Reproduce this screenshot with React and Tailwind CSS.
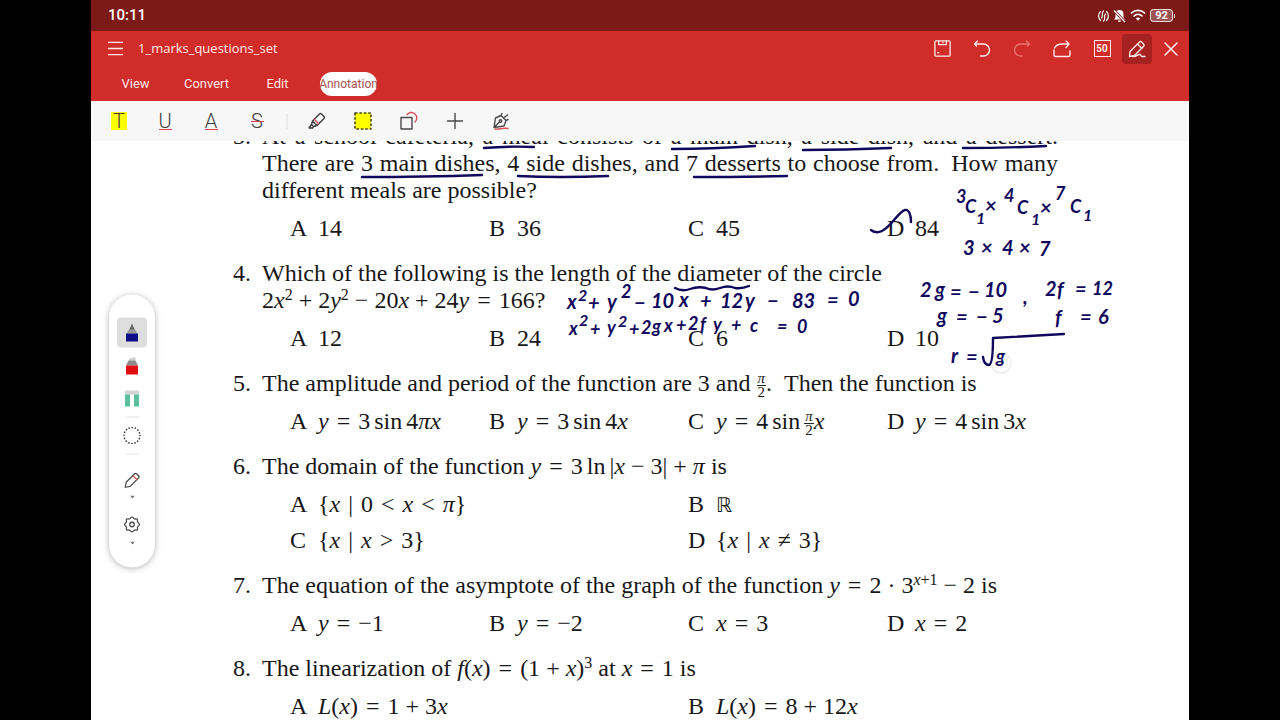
import React, { useState } from 'react';
import { Menu, X } from 'lucide-react';

// ---------- math helpers ----------

const V = ({ children }) => <i className="font-normal">{children}</i>;
const Op = ({ children }) => <span className="mx-2">{children}</span>;
const Bin = ({ children }) => <span className="mx-1.5">{children}</span>;
const Sup = ({ children }) => <sup className="text-[16px] leading-none">{children}</sup>;
const Thin = () => <span className="ml-1" />;

const Frac = ({ top, bottom }) => (
  <span className="-my-1 inline-flex flex-col items-center align-middle text-[15px] leading-[13px]">
    <span className="border-b border-neutral-800 px-px">{top}</span>
    <span>{bottom}</span>
  </span>
);

const questions = [
  {
    n: 3,
    lines: [
      { full: true, text: 'At a school cafeteria, a meal consists of a main dish, a side dish, and a dessert.' },
      { full: true, text: <>There are 3 main dishes, 4 side dishes, and 7 desserts to choose from.&ensp;How many</> },
      { text: 'different meals are possible?' },
    ],
    options: ['14', '36', '45', '84'],
  },
  {
    n: 4,
    lines: [
      { text: 'Which of the following is the length of the diameter of the circle' },
      { text: <>2<V>x</V><Sup>2</Sup><Bin>+</Bin>2<V>y</V><Sup>2</Sup><Bin>−</Bin>20<V>x</V><Bin>+</Bin>24<V>y</V><Op>=</Op>166?</> },
    ],
    options: ['12', '24', '6', '10'],
  },
  {
    n: 5,
    lines: [
      { text: <>The amplitude and period of the function are 3 and <Frac top={<V>π</V>} bottom="2" />.&ensp;Then the function is</> },
    ],
    options: [
      <><V>y</V><Op>=</Op>3<Thin />sin<Thin />4<V>πx</V></>,
      <><V>y</V><Op>=</Op>3<Thin />sin<Thin />4<V>x</V></>,
      <><V>y</V><Op>=</Op>4<Thin />sin<Thin /><Frac top={<V>π</V>} bottom="2" /><V>x</V></>,
      <><V>y</V><Op>=</Op>4<Thin />sin<Thin />3<V>x</V></>,
    ],
  },
  {
    n: 6,
    wide: true,
    lines: [
      { text: <>The domain of the function <V>y</V><Op>=</Op>3<Thin />ln<Thin />|<V>x</V><Bin>−</Bin>3|<Bin>+</Bin><V>π</V> is</> },
    ],
    options: [
      <>{'{'}<V>x</V><Op>|</Op>0<Op>&lt;</Op><V>x</V><Op>&lt;</Op><V>π</V>{'}'}</>,
      <span className="font-['DejaVu_Sans'] text-[20px]">ℝ</span>,
      <>{'{'}<V>x</V><Op>|</Op><V>x</V><Op>&gt;</Op>3{'}'}</>,
      <>{'{'}<V>x</V><Op>|</Op><V>x</V><Op>≠</Op>3{'}'}</>,
    ],
  },
  {
    n: 7,
    lines: [
      { text: <>The equation of the asymptote of the graph of the function <V>y</V><Op>=</Op>2<Bin>·</Bin>3<Sup><V>x</V>+1</Sup><Bin>−</Bin>2 is</> },
    ],
    options: [
      <><V>y</V><Op>=</Op>−1</>,
      <><V>y</V><Op>=</Op>−2</>,
      <><V>x</V><Op>=</Op>3</>,
      <><V>x</V><Op>=</Op>2</>,
    ],
  },
  {
    n: 8,
    wide: true,
    lines: [
      { text: <>The linearization of <V>f</V>(<V>x</V>)<Op>=</Op>(1<Bin>+</Bin><V>x</V>)<Sup>3</Sup> at <V>x</V><Op>=</Op>1 is</> },
    ],
    options: [
      <><V>L</V>(<V>x</V>)<Op>=</Op>1<Bin>+</Bin>3<V>x</V></>,
      <><V>L</V>(<V>x</V>)<Op>=</Op>8<Bin>+</Bin>12<V>x</V></>,
    ],
  },
];

function Question({ q }) {
  return (
    <li className="mb-[18px] flex">
      <span className="w-[29px] shrink-0">{q.n}.</span>
      <div className="min-w-0 flex-1">
        {q.lines.map((line, i) => (
          <p key={i} className={line.full ? 'whitespace-nowrap [text-align-last:justify]' : 'whitespace-nowrap'}>
            {line.text}
          </p>
        ))}
        <ol className={`mt-[11px] -mr-7 ml-7 grid gap-y-[9px] ${q.wide ? 'grid-cols-2' : 'grid-cols-4'}`}>
          {q.options.map((opt, i) => (
            <li key={i} className="flex h-[27px] whitespace-nowrap">
              <span className="w-7 shrink-0">{'ABCD'[i]}</span>
              <span>{opt}</span>
            </li>
          ))}
        </ol>
      </div>
    </li>
  );
}

// ---------- pen annotations ----------

const noteSize = { sm: 'text-[16px]', md: 'text-[18px]', lg: 'text-[20px]' };

// [x, baseline, text, size]
const notes = [
  [567, 309, 'x', 'lg'], [578, 301, '2', 'sm'], [588, 310, '+', 'lg'], [607, 309, 'y', 'lg'], [621, 298, '2', 'md'],
  [634, 310, '−', 'lg'], [651, 308, '10', 'lg'], [679, 307, 'x', 'lg'], [700, 308, '+', 'lg'], [720, 308, '12', 'lg'],
  [745, 308, 'y', 'lg'], [767, 308, '−', 'lg'], [792, 308, '83', 'lg'], [827, 307, '=', 'lg'], [848, 306, '0', 'lg'],

  [569, 335, 'x', 'md'], [579, 326, '2', 'sm'], [590, 336, '+', 'md'], [607, 334, 'y', 'md'], [618, 327, '2', 'sm'],
  [629, 336, '+', 'md'], [641, 334, '2', 'md'], [652, 333, 'g', 'md'], [664, 332, 'x', 'md'], [676, 332, '+', 'md'],
  [688, 330, '2', 'md'], [700, 331, 'f', 'md'], [713, 331, 'y', 'md'], [731, 332, '+', 'md'], [750, 332, 'c', 'md'],
  [777, 333, '=', 'md'], [797, 333, '0', 'md'],

  [956, 203, '3', 'md'], [965, 213, 'C', 'md'], [976, 224, '1', 'sm'], [985, 213, '×', 'lg'], [1004, 202, '4', 'md'],
  [1017, 214, 'C', 'md'], [1031, 225, '1', 'sm'], [1040, 215, '×', 'lg'], [1055, 200, '7', 'md'], [1070, 213, 'C', 'md'],
  [1083, 221, '1', 'sm'],

  [963, 255, '3', 'lg'], [981, 255, '×', 'lg'], [1002, 255, '4', 'lg'], [1019, 255, '×', 'lg'], [1039, 256, '7', 'lg'],

  [920, 297, '2', 'lg'], [935, 297, 'g', 'lg'], [950, 299, '=', 'lg'], [968, 299, '−', 'lg'], [984, 297, '10', 'lg'],
  [1023, 304, ',', 'lg'], [1045, 296, '2', 'lg'], [1057, 297, 'f', 'lg'], [1075, 296, '=', 'lg'], [1092, 295, '12', 'md'],
  [937, 323, 'g', 'lg'], [956, 324, '=', 'lg'], [976, 324, '−', 'lg'], [992, 323, '5', 'lg'],
  [1055, 325, 'f', 'lg'], [1080, 324, '=', 'lg'], [1098, 324, '6', 'lg'],
  [951, 363, 'r', 'lg'], [966, 364, '=', 'lg'], [996, 363, 'g', 'md'],
];

const strokes = [
  'M484 148 Q508 146 534 147',
  'M672 149 Q712 149 755 146',
  'M803 150 Q846 150 891 148',
  'M963 148 Q1004 148 1046 146',
  'M362 177 Q424 177 482 175',
  'M518 176 Q560 178 608 176',
  'M694 177 Q740 177 787 176',
  'M675 288 Q682 292 690 289 Q698 286 706 288 Q712 291 720 288 Q728 285 735 288 Q742 289 749 286',
  'M871 230 Q876 234 882 231 C892 226 898 212 905 210 C909 209 911 215 911 222',
  'M983 357 Q984 365 989 365 Q993 364 993 338 Q1028 336 1064 334',
];

function InkLayer() {
  return (
    <svg className="pointer-events-none absolute inset-0 h-full w-full overflow-hidden" aria-label="Annotations">
      <g transform="translate(-91 -141)" fill="#10085c">
        <circle cx="1001" cy="363" r="10" fill="none" stroke="#f1f1f4" strokeWidth="2" />
        {strokes.map((d) => (
          <path key={d} d={d} fill="none" stroke="#10085c" strokeWidth="2.4" strokeLinecap="round" strokeLinejoin="round" />
        ))}
        {notes.map(([x, y, text, size]) => (
          <text key={`${x}-${y}`} x={x} y={y} className={`font-[Lato] font-bold italic ${noteSize[size]}`}>
            {text}
          </text>
        ))}
      </g>
    </svg>
  );
}

// ---------- icons ----------

const Icon = ({ size = 20, children, ...rest }) => (
  <svg width={size} height={size} viewBox="0 0 20 20" fill="none" stroke="currentColor" strokeWidth="1.4" strokeLinecap="round" strokeLinejoin="round" {...rest}>
    {children}
  </svg>
);

const SaveIcon = () => (
  <Icon size={19}>
    <rect x="2" y="2" width="16" height="16" rx="1" />
    <path d="M6 2v4h8V2M10.500 3v1M5 14.500h1" />
  </Icon>
);

const UndoIcon = () => (
  <Icon>
    <path d="M5.500 2 2.500 5h9a6 6 0 0 1 0 12H8.500M2.500 5 4.500 7" />
  </Icon>
);

const RedoIcon = () => (
  <Icon>
    <path d="M14.500 2l3 3h-9a6 6 0 0 0 0 12H10M17.500 5 15.500 7" />
  </Icon>
);

const ShareIcon = () => (
  <Icon>
    <path d="M2 11v5a1.500 1.500 0 0 0 1.500 1.500h13A1.500 1.500 0 0 0 18 16v-4M2.500 9C4 6 7 5 10 5h7M14 2l3 3-3 3.500" />
  </Icon>
);

const EditIcon = () => (
  <Icon>
    <path d="M2.500 17.500 3 12.500 12.500 3a1.500 1.500 0 0 1 2 0l2.200 2.200a1.500 1.500 0 0 1 0 2L7.500 16.500zM10.500 5l4.500 4.500M6 17.500c3 .5 5-2.500 7-2 1.500.4.500 2 2 2h3" />
  </Icon>
);

const PencilRed = () => (
  <Icon size={18} stroke="#4b4b4b">
    <path d="M2.500 17.500 3.500 12 13 2.500a1.500 1.500 0 0 1 2 0L17.500 5a1.500 1.500 0 0 1 0 2L8 16.500z" />
    <path d="m11.500 5 4 4" stroke="#d8505a" />
  </Icon>
);

const MarkerIcon = () => (
  <Icon stroke="#3d3d3d">
    <path d="M5.500 10 12.500 3a1.500 1.500 0 0 1 2 0L17 5.500a1.500 1.500 0 0 1 0 2L10 14.500zM5.500 10l-1 3.500 2 2 3.500-1M4.500 13.500 2 17h3.500l1-1.500" />
    <path d="m7.500 8.500 4 4" stroke="#d8505a" />
  </Icon>
);

const AreaIcon = () => (
  <Icon>
    <rect x="2" y="2" width="16" height="16" fill="#ffff00" stroke="#4a4a10" strokeWidth="1.600" strokeDasharray="2.600 1.800" strokeLinecap="butt" />
  </Icon>
);

const ShapesIcon = () => (
  <Icon stroke="#4a4a4a">
    <rect x="2" y="6.500" width="11" height="11.500" />
    <path d="M8 3.500a5.500 5.500 0 1 1 8 7.500" stroke="#d8505a" />
  </Icon>
);

const PlusIcon = () => (
  <Icon stroke="#4a4a4a">
    <path d="M10 2.500v15M2.500 10h15" />
  </Icon>
);

const SignIcon = () => (
  <Icon stroke="#4a4a4a">
    <path d="M3 16.500 4.500 7l5.500-2.500 5 5-2 5.500zM3 16.500 8.500 11M10 4.500l1-2M15 9.500l2-1M12.500 7l4-3" />
    <circle cx="9.500" cy="10" r="1.200" />
    <path d="M4 18c4 .6 8-1.500 13-.5" stroke="#d8505a" />
  </Icon>
);

const GearIcon = () => (
  <Icon size={18} stroke="#4b4b4b">
    <path d="M10 1.800C11.500 1.800 11.800 3.500 13 3.800S15.500 3.500 16 4.200 15.700 6.200 16.200 7.300 18.200 8.800 18.200 10 16.600 11.600 16.200 12.700 16.700 15 16 15.800 14.200 15.800 13 16.200 11.500 18.200 10 18.200 8.200 16.600 7 16.200 4.700 16.600 4 15.800 4.200 13.800 3.800 12.700 1.800 11.300 1.800 10 3.400 8.400 3.800 7.300 3.300 5 4 4.200 5.800 4.200 7 3.800 8.500 1.800 10 1.800z" />
    <circle cx="10" cy="10" r="2.500" />
  </Icon>
);

const PenTip = () => (
  <svg width="14" height="20" viewBox="0 0 14 20">
    <path d="M7 1 10 8H4z" fill="#666" />
    <path d="M4 7h6l2.500 4h-11z" fill="#999" />
    <rect x="1" y="11" width="12" height="8" fill="#0b0b86" />
  </svg>
);

const HighlighterTip = () => (
  <svg width="14" height="20" viewBox="0 0 14 20">
    <path d="M4 3 10.500 1.500V5H4z" fill="#d0d0d0" />
    <path d="M3.500 5h7l2.500 5H1z" fill="#8b8b8b" />
    <rect x="1" y="10" width="12" height="9" fill="#e00d12" />
  </svg>
);

const EraserTip = () => (
  <svg width="14" height="18" viewBox="0 0 14 18">
    <rect x="0" y="1" width="14" height="4" fill="#d4d4d4" />
    <rect x="0" y="5" width="5" height="12" fill="#5cc0a0" />
    <rect x="9" y="5" width="5" height="12" fill="#5cc0a0" />
  </svg>
);

const Caret = () => (
  <svg width="5" height="3" viewBox="0 0 5 3" className="shrink-0">
    <path d="M0 0h5L2.500 3z" fill="#777" />
  </svg>
);

// ---------- chrome ----------

function StatusBar() {
  return (
    <div className="flex h-[31px] items-center justify-between bg-[#7c1a18] pr-3.5 pl-[17px] text-white">
      <span className="text-[15px] font-medium">10:11</span>
      <div className="flex items-center gap-1">
        <svg width="11" height="12" viewBox="0 0 11 12" fill="none" stroke="currentColor" strokeWidth="1.200" strokeLinecap="round">
          <path d="M2.500 1.500C0 4 0 8 2.500 10.500M8.500 1.500c2.500 2.500 2.500 6.500 0 9M5.500 1C2.500 3.500 6 5.500 3.500 8M7.500 4C5 6.500 8.500 8.500 5.500 11" />
        </svg>
        <svg width="13" height="14" viewBox="0 0 13 14">
          <path d="M6.500 1a4 4 0 0 1 4 4v3.500l1.500 2H1l1.500-2V5a4 4 0 0 1 4-4zM5 11.500h3a1.500 1.500 0 0 1-3 0z" fill="currentColor" />
          <path d="M1 1.500 12 13" stroke="#7c1a18" strokeWidth="3" />
          <path d="M1 1.500 12 13" stroke="currentColor" strokeWidth="1.200" />
        </svg>
        <svg width="16" height="13" viewBox="0 0 16 13" fill="none" stroke="currentColor" strokeWidth="1.7" strokeLinecap="round">
          <path d="M1.500 4C5 .6 11 .6 14.500 4M4 7C6.300 4.800 9.700 4.800 12 7" />
          <path d="M5.800 9.400Q8 7.800 10.200 9.400L8 11.800z" fill="currentColor" stroke="none" />
        </svg>
        <div className="flex items-center">
          <span className="flex h-[13px] w-[23px] items-center justify-center rounded border border-white/80 bg-white/25 text-[11px] leading-none font-bold">92</span>
          <span className="ml-px h-1 w-px bg-white/80" />
        </div>
      </div>
    </div>
  );
}

const tabs = ['View', 'Convert', 'Edit', 'Annotation'];

function Header({ tab, setTab }) {
  const btn = 'flex size-[30px] items-center justify-center rounded';
  return (
    <header className="bg-[#d02c2a] text-[#ffe9e6]">
      <div className="flex h-[35px] items-center justify-between pr-[3px] pl-3.5">
        <div className="flex items-center gap-3">
          <button aria-label="Menu"><Menu size={21} strokeWidth={1.5} /></button>
          <h1 className="font-['Open_Sans'] text-[13px]">1_marks_questions_set</h1>
        </div>
        <div className="flex items-center">
          <div className="flex items-center gap-2.5">
            <button aria-label="Save" className={btn}><SaveIcon /></button>
            <button aria-label="Undo" className={btn}><UndoIcon /></button>
            <button aria-label="Redo" className={`${btn} text-[#ea716c]`}><RedoIcon /></button>
            <button aria-label="Share" className={btn}><ShareIcon /></button>
            <button aria-label="Page 50" className={btn}>
              <span className="flex size-[17px] items-center justify-center border border-current text-[10px] leading-none font-bold">50</span>
            </button>
          </div>
          <div className="ml-[5px] flex items-center gap-1">
            <button aria-label="Edit mode" className={`${btn} bg-[#a52220]`}><EditIcon /></button>
            <button aria-label="Close" className={btn}><X size={24} strokeWidth={1.6} /></button>
          </div>
        </div>
      </div>
      <nav className="flex h-[35px] items-center pl-[9px] text-[13px]">
        {tabs.map((t) => (
          <button
            key={t}
            onClick={() => setTab(t)}
            className={`mx-[7px] flex h-6 w-[57px] items-center justify-center rounded-full ${t === tab ? 'bg-white text-[12px] text-[#a8504e]' : ''}`}
          >
            {t}
          </button>
        ))}
      </nav>
    </header>
  );
}

function Toolbar() {
  const btn = 'flex h-10 w-[46px] items-center justify-center';
  const letter = 'relative flex h-[18px] items-center justify-center text-[20px] leading-none font-light text-neutral-700';
  return (
    <div className="relative z-10 flex h-10 items-center bg-[#f7f7f7] pl-[5px]">
      <button aria-label="Highlight" className={btn}><span className={`${letter} w-4 bg-[#ffff00]`}>T</span></button>
      <button aria-label="Underline" className={btn}>
        <span className={`${letter} w-[13px]`}>
          U
          <span className="absolute inset-x-0 bottom-0 h-px bg-[#e0404e]" />
        </span>
      </button>
      <button aria-label="Squiggly" className={btn}>
        <span className={`${letter} w-[13px]`}>
          A
          <span className="absolute inset-x-0 bottom-0 h-px bg-[#e0404e]" />
        </span>
      </button>
      <button aria-label="Strikeout" className={btn}>
        <span className={`${letter} w-[13px]`}>
          S
          <span className="absolute inset-x-0 top-1/2 h-px bg-[#e0404e]" />
        </span>
      </button>
      <span className="mx-1.5 h-4 w-0.5 bg-[#ebebeb]" />
      <button aria-label="Marker" className={btn}><MarkerIcon /></button>
      <button aria-label="Area highlight" className={btn}><AreaIcon /></button>
      <button aria-label="Shapes" className={btn}><ShapesIcon /></button>
      <button aria-label="Add" className={btn}><PlusIcon /></button>
      <button aria-label="Sign" className={btn}><SignIcon /></button>
    </div>
  );
}

function PenPalette() {
  const btn = 'flex size-[30px] shrink-0 items-center justify-center rounded';
  return (
    <aside className="absolute top-1/2 left-[18px] flex w-[46px] -translate-y-1/2 flex-col items-center rounded-full bg-white pt-[23px] pb-[23px] shadow-[0_1px_6px_rgba(0,0,0,0.3)]">
      <button aria-label="Pen" className={`${btn} bg-[#dedede]`}><PenTip /></button>
      <button aria-label="Highlighter" className={`${btn} mt-[3px]`}><HighlighterTip /></button>
      <button aria-label="Eraser" className={`${btn} mt-[3px]`}><EraserTip /></button>
      <span className="my-[3px] h-px w-[13px] bg-[#e2e2e2]" />
      <button aria-label="Lasso" className={btn}>
        <svg width="18" height="18" viewBox="0 0 18 18" fill="none" stroke="#333">
          <circle cx="9" cy="9" r="8" strokeWidth="1.600" strokeLinecap="round" strokeDasharray="0.1 3.040" />
        </svg>
      </button>
      <span className="my-[3px] h-px w-[13px] bg-[#e2e2e2]" />
      <button aria-label="Pencil settings" className={`${btn} mt-2`}><PencilRed /></button>
      <Caret />
      <button aria-label="Settings" className={`${btn} mt-[11px]`}><GearIcon /></button>
      <span className="mt-0.5 flex"><Caret /></span>
    </aside>
  );
}

export default function App() {
  const [tab, setTab] = useState('Annotation');

  return (
    <div className="h-screen bg-black px-[91px] font-[Roboto,sans-serif]">
      <div className="flex h-full flex-col overflow-hidden bg-white">
        <StatusBar />
        <Header tab={tab} setTab={setTab} />
        <Toolbar />
        <main className="relative min-h-0 flex-1 overflow-hidden">
          <ol className="-mt-[18px] pr-[131px] pl-[142px] font-['Liberation_Serif',serif] text-[24px] leading-[27px] text-neutral-900">
            {questions.map((q) => (
              <Question key={q.n} q={q} />
            ))}
          </ol>
          <InkLayer />
          <PenPalette />
        </main>
      </div>
    </div>
  );
}
